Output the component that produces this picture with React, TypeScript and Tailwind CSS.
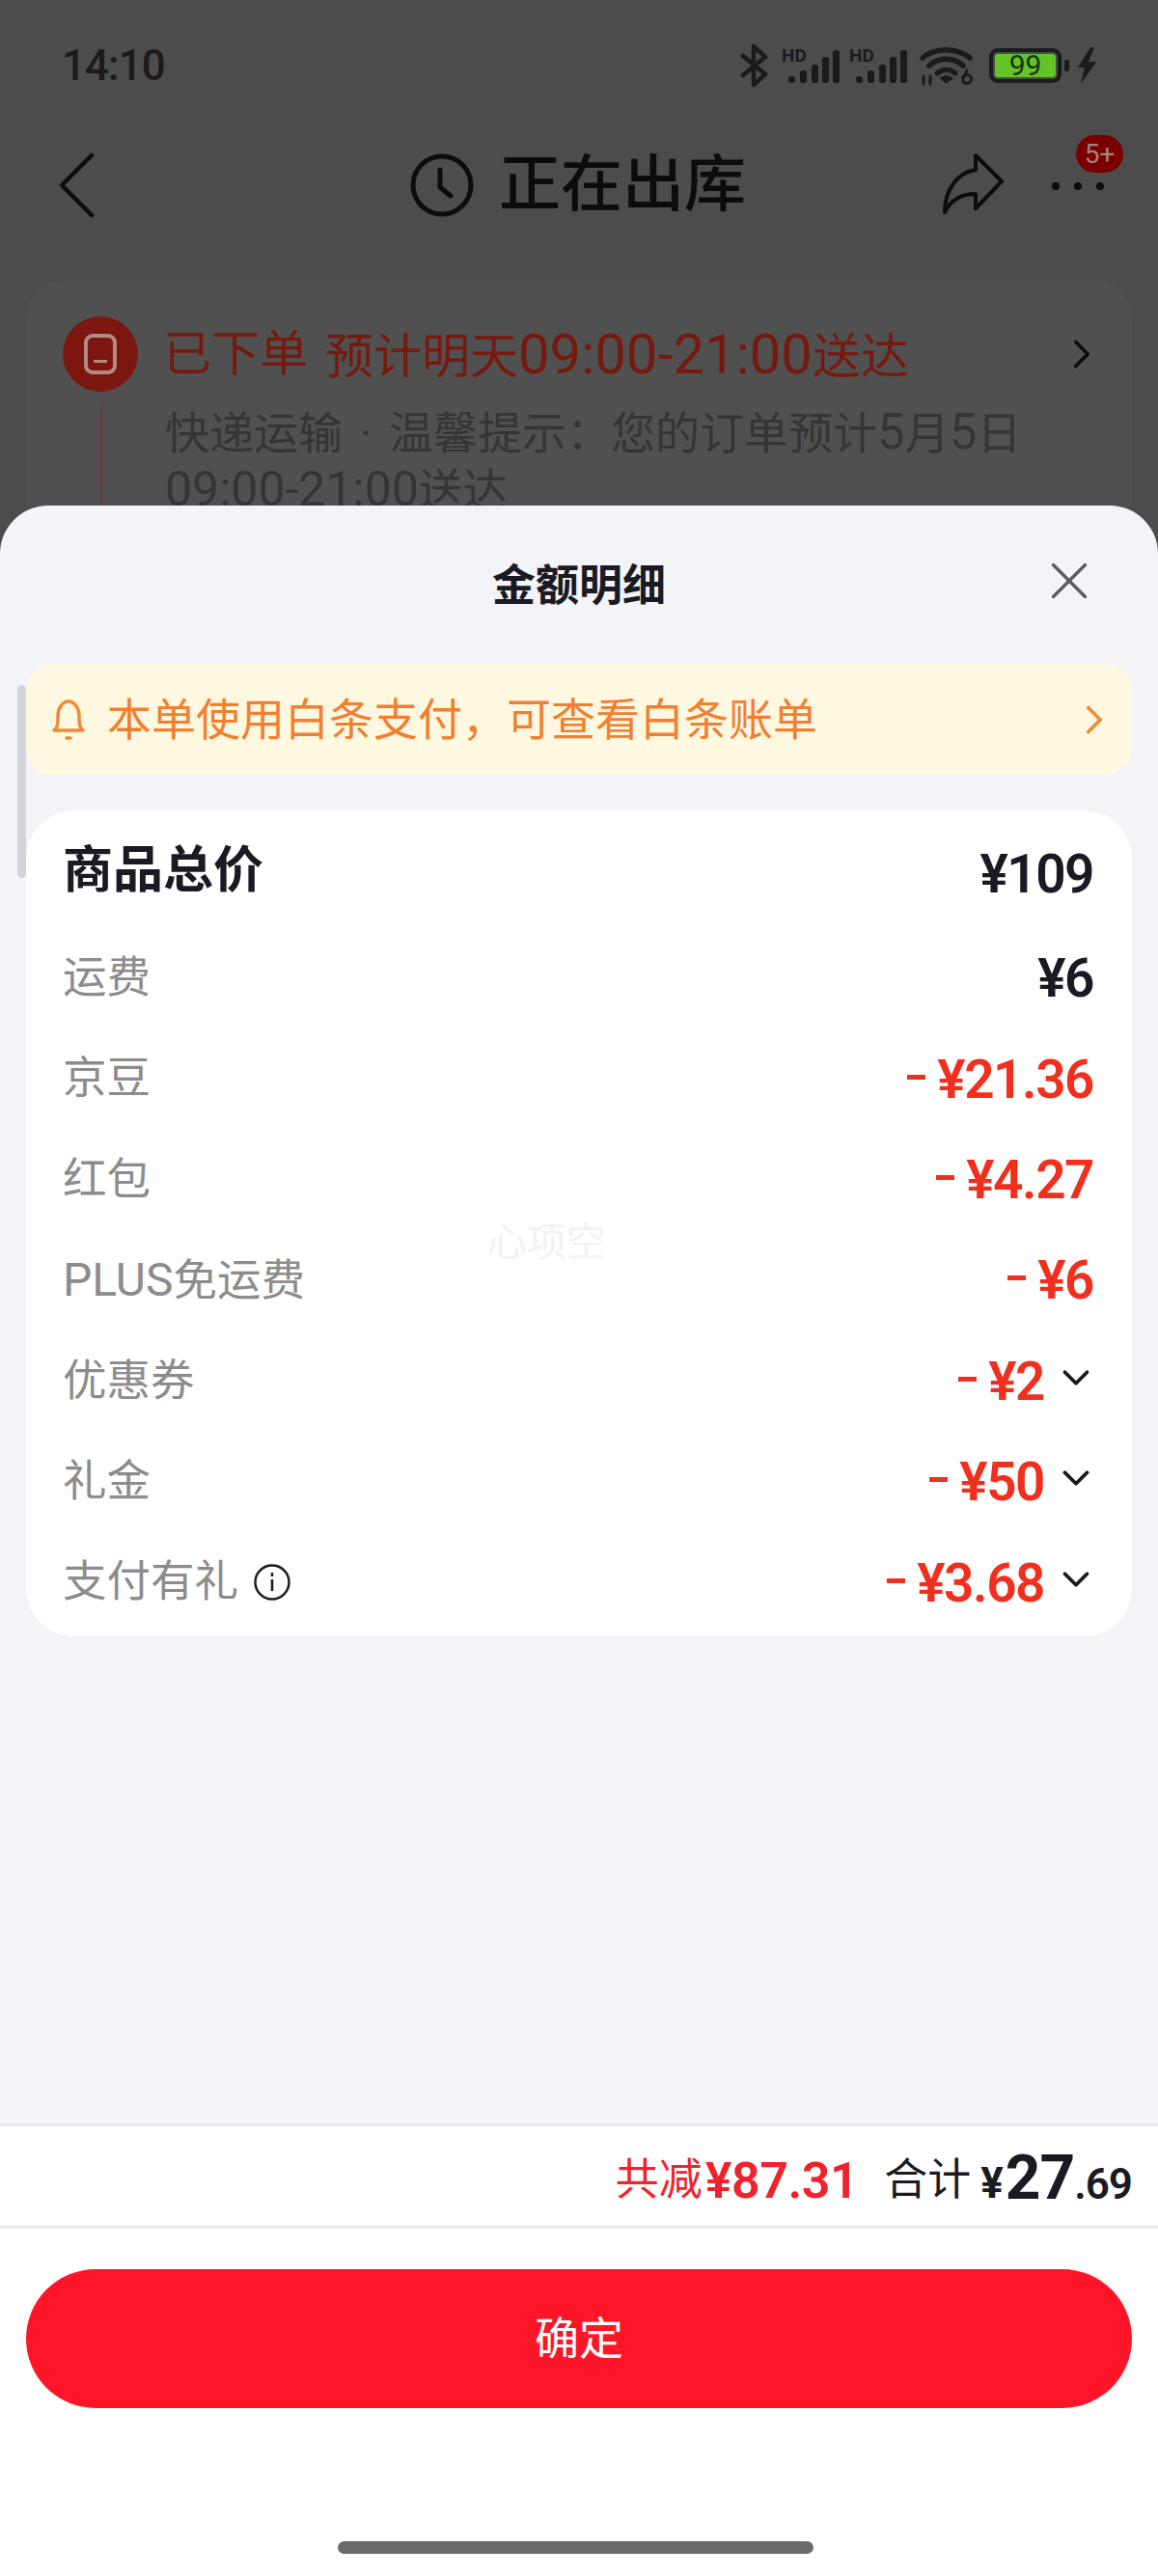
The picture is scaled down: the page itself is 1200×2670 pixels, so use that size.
import { ChevronDown, ChevronRight, X } from 'lucide-react';

const rows = [
  { label: '运费', amount: '¥6', discount: false, expand: false },
  { label: '京豆', amount: '¥21.36', discount: true, expand: false },
  { label: '红包', amount: '¥4.27', discount: true, expand: false },
  { label: '免运费', prefix: 'PLUS', amount: '¥6', discount: true, expand: false },
  { label: '优惠券', amount: '¥2', discount: true, expand: true },
  { label: '礼金', amount: '¥50', discount: true, expand: true },
  { label: '支付有礼', amount: '¥3.68', discount: true, expand: true, info: true },
];

function Signal() {
  return (
    <svg className="mb-[4px]" width="60" height="42" viewBox="0 -4 60 42" fill="#1b1b1c">
      <text x="0" y="15" fontSize="19" fontWeight="700" fontFamily="Roboto, sans-serif">HD</text>
      <rect x="7" y="30" width="7" height="7" rx="3" />
      <rect x="19" y="24" width="7" height="13" rx="2.5" />
      <rect x="31" y="18" width="7" height="19" rx="2.5" />
      <rect x="42" y="10" width="7" height="27" rx="2.5" />
      <rect x="53" y="3" width="7" height="34" rx="2.5" />
    </svg>
  );
}

function StatusIcons() {
  return (
    <div className="flex items-center">
      <svg width="30" height="46" viewBox="0 0 30 46" fill="none" stroke="#1b1b1c" strokeWidth="4.5" strokeLinejoin="round" strokeLinecap="round">
        <path d="M3 13 L26 32 L14 43 V3 L26 14 L3 33" />
      </svg>
      <div className="ml-[13px] flex"><Signal /></div>
      <div className="ml-[10px] flex"><Signal /></div>
      <svg className="ml-[13px]" width="56" height="42" viewBox="0 0 56 42" fill="none" stroke="#1b1b1c" strokeWidth="5.5" strokeLinecap="round">
        <path d="M3 13 C16 2 38 2 52 13" />
        <path d="M10 21 C20 12 35 12 45 21" />
        <path d="M18 29 C24 24 31 24 37 29" strokeWidth="5" />
        <path d="M27.5 39 L21 34 L27.5 31 L34 34 Z" fill="#1b1b1c" strokeWidth="1" />
        <path d="M4 32 V40 M11 32 V40" strokeWidth="3" />
        <circle cx="49" cy="35" r="4.5" strokeWidth="3" />
        <path d="M46 33 L49 26" strokeWidth="3" />
      </svg>
      <div className="ml-[16px] flex h-[36px] w-[75px] items-center justify-center rounded-[9px] border-[4px] border-[#1b1b1e] bg-[#4c4c4c] p-[2px]">
        <div className="flex h-full w-full items-center justify-center rounded-[3px] bg-[#63c42a] text-[30px] leading-none text-[#16330a]">99</div>
      </div>
      <div className="ml-[3px] h-[12px] w-[5px] rounded-[2px] bg-[#1b1b1c]" />
      <svg className="ml-[7px]" width="22" height="38" viewBox="0 0 22 38" fill="#1b1b1c">
        <path d="M15 0 L2 21 H9 L5 38 L21 15 H13 L19 0 Z" />
      </svg>
    </div>
  );
}

function OrderBackdrop() {
  return (
    <div className="h-[524px] overflow-hidden">
      <div className="flex h-[136px] items-center justify-between pl-[64px] pr-[63px]">
        <span className="text-[44px] font-medium tracking-[-1px] text-[#1b1b1c]">14:10</span>
        <StatusIcons />
      </div>
      <div className="relative flex h-[112px] items-center justify-center pr-[2px]">
        <svg className="absolute left-[60px] top-[22px]" width="40" height="68" viewBox="0 0 40 68" fill="none" stroke="#0c0c0c" strokeWidth="4.5" strokeLinecap="round" strokeLinejoin="round">
          <path d="M35 3 L4 34 L35 65" />
        </svg>
        <svg width="66" height="66" viewBox="0 0 66 66" fill="none" stroke="#0c0c0c" strokeWidth="5" strokeLinecap="round" strokeLinejoin="round">
          <circle cx="33" cy="33" r="30" />
          <path d="M31 17 V35 L42 44" />
        </svg>
        <span className="ml-[26px] text-[64px] font-medium leading-none text-[#0c0c0c]">正在出库</span>
        <svg className="absolute left-[975px] top-[22px]" width="66" height="66" viewBox="0 0 66 66" fill="none" stroke="#0c0c0c" strokeWidth="4" strokeLinejoin="round">
          <path d="M36 3 L63 30 L36 58 V43 C22 43 11 48 4 62 C4 40 16 21 36 18 Z" />
        </svg>
        <div className="absolute left-[1090px] top-[53px] flex gap-[15px]">
          <div className="h-[8px] w-[8px] rounded-full bg-[#0c0c0c]" />
          <div className="h-[8px] w-[8px] rounded-full bg-[#0c0c0c]" />
          <div className="h-[8px] w-[8px] rounded-full bg-[#0c0c0c]" />
        </div>
        <div className="absolute left-[1115px] top-[4px] flex h-[39px] w-[49px] items-center justify-center rounded-full bg-[#7a0000] text-[28px] leading-none text-[#a88080]">5+</div>
      </div>
      <div className="mx-[27px] mt-[42px] h-[300px] rounded-t-[40px] bg-[#505050] pl-[38px] pr-[27px] pt-[38px]">
        <div className="flex items-center">
          <div className="flex h-[78px] w-[78px] items-center justify-center rounded-full bg-[#7c1710]">
            <div className="flex h-[42px] w-[34px] items-end rounded-[9px] border-[4px] border-[#b58a86] pb-[8px] pl-[6px]">
              <div className="h-[3px] w-[14px] bg-[#b58a86]" />
            </div>
          </div>
          <span className="ml-[26px] text-[50px] leading-none text-[#761a10]">已下单</span>
          <span className="ml-[18px] text-[50px] leading-none text-[#761a10]">
            预计明天<span className="text-[58px]">09:00-21:00</span>送达
          </span>
          <ChevronRight className="ml-auto text-[#0c0c0c]" size={50} strokeWidth={1.7} />
        </div>
        <div className="mt-[13px] flex">
          <div className="ml-[39px] w-[2px] bg-[#6a3a36]" />
          <p className="ml-[65px] w-[920px] text-[46px] leading-[58px] text-[#353535]">
            快递运输<span className="mx-[18px]">·</span>温馨提示：您的订单预计<span className="text-[51px]">5</span>月<span className="text-[51px]">5</span>日
            <br />
            <span className="text-[50px]">09:00-21:00</span>送达
          </p>
        </div>
      </div>
    </div>
  );
}

function Amount({ text, discount }: { text: string; discount: boolean }) {
  if (!discount) return <span className="mt-[3px] text-[55px] font-semibold leading-none tracking-[-1.5px] text-[#1a1a24]">{text}</span>;
  return (
    <span className="mt-[3px] flex items-center text-[55px] font-semibold leading-none tracking-[-1.5px] text-[#f0301f]">
      <span className="mb-[6px] mr-[12px] h-[5px] w-[19px] bg-[#f0301f]" />
      {text}
    </span>
  );
}

export default function App() {
  return (
    <div className="relative flex h-[2670px] w-[1200px] flex-col overflow-hidden bg-[#4c4c4c] font-['Roboto','Noto_Sans_CJK_SC',sans-serif]">
      <OrderBackdrop />
      <div className="relative flex flex-1 flex-col rounded-t-[50px] bg-[#f2f4f8]">
        <div className="relative flex h-[164px] items-center justify-center">
          <span className="mt-[2px] text-[45px] font-bold leading-none text-[#1a1a24]">金额明细</span>
          <X className="absolute right-[59px] top-[45px] text-[#5a5a60]" size={66} strokeWidth={1.2} />
        </div>
        <div className="absolute left-[18px] top-[186px] h-[200px] w-[9px] rounded-full bg-[#d2d5da]" />
        <div className="mx-[27px] flex h-[115px] items-center rounded-[28px] bg-[#fff8e1] pl-[26px] pr-[14px]">
          <svg width="36" height="44" viewBox="0 0 36 44" fill="none" stroke="#f08a35" strokeWidth="3.5" strokeLinecap="round" strokeLinejoin="round">
            <path d="M3 33 C7 30 7 26 7 18 C7 10 12 3 18 3 C24 3 29 10 29 18 C29 26 29 30 33 33 Z" />
            <path d="M16 41 H20" />
          </svg>
          <span className="ml-[22px] text-[46px] leading-none text-[#f08030]">本单使用白条支付，可查看白条账单</span>
          <ChevronRight className="ml-auto text-[#f08a35]" size={50} strokeWidth={1.8} />
        </div>
        <div className="relative mx-[27px] mt-[37px] rounded-[50px] bg-white pb-[4px] pl-[38px] pr-[40px] pt-[8px]">
          <div className="flex h-[113px] items-center justify-between">
            <span className="mt-[-3px] text-[52px] font-bold leading-none text-[#1a1a24]">商品总价</span>
            <Amount text="¥109" discount={false} />
          </div>
          {rows.map((row) => (
            <div key={row.label} className="flex h-[104.4px] items-center">
              <span className="mt-[1px] text-[45.5px] leading-none text-[#8c8c8c]">
                {row.prefix && <span className="text-[48px]">{row.prefix}</span>}
                {row.label}
              </span>
              {row.info && (
                <svg className="ml-[15px]" width="40" height="40" viewBox="0 0 40 40" fill="none" stroke="#1a1a24" strokeWidth="2.5">
                  <circle cx="20" cy="20" r="17.5" />
                  <path d="M20 17 V29" />
                  <path d="M20 10 V14" />
                </svg>
              )}
              <div className="ml-auto flex items-center">
                <Amount text={row.amount} discount={row.discount} />
                {row.expand && <ChevronDown className="mb-[6px] ml-[10px] mr-[-5px] text-[#1a1a24]" size={46} strokeWidth={2} />}
              </div>
            </div>
          ))}
          <span className="absolute left-[478px] top-[428px] text-[41px] leading-none text-[#f1f3f6]">心项空</span>
        </div>
        <div className="mt-auto flex h-[109px] items-center justify-end border-y-[3px] border-[#e6e7ea] bg-white pr-[27px] pt-[6px]">
          <span className="mt-[2px] text-[45px] leading-none text-[#f0222c]">共减</span>
          <span className="ml-[3px] mt-[4px] text-[52px] font-semibold leading-none tracking-[-0.5px] text-[#f0222c]">¥87.31</span>
          <span className="ml-[27px] mt-[2px] text-[45px] leading-none text-[#1a1a24]">合计</span>
          <span className="ml-[10px] mt-[8px] text-[44px] font-bold leading-none text-[#1a1a24]">¥</span>
          <span className="ml-[2px] mt-[-2px] text-[64px] font-bold leading-none tracking-[-1px] text-[#1a1a24]">27</span>
          <span className="mt-[10px] text-[44px] font-semibold leading-none tracking-[-1px] text-[#1a1a24]">.69</span>
        </div>
        <div className="flex h-[360px] flex-col items-center bg-white pt-[42px]">
          <button className="flex h-[144px] w-[1146px] items-center justify-center rounded-[72px] bg-[#ff1528] text-[46px] leading-none text-white">确定</button>
          <div className="ml-[-8px] mt-[138px] h-[13px] w-[493px] rounded-full bg-[#6b6b6b]" />
        </div>
      </div>
    </div>
  );
}
